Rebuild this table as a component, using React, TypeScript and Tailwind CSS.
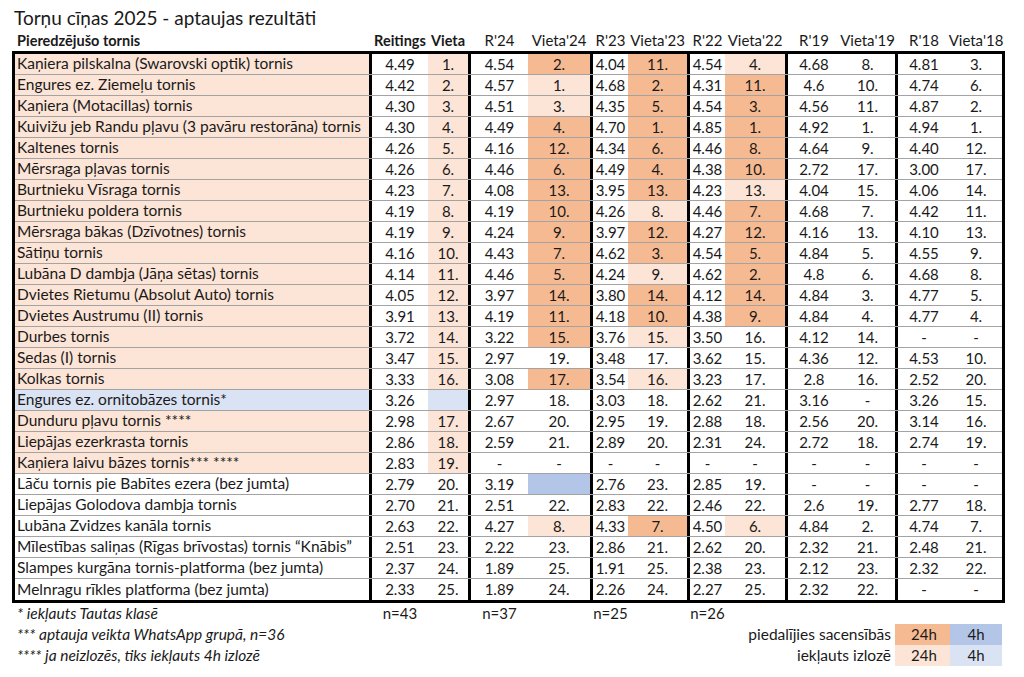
import React from "react";

type Fill = "" | "D" | "L" | "B" | "b";

const fillClass: Record<Fill, string> = {
  "": "bg-white",
  D: "bg-[#f6ba92]",
  L: "bg-[#fce4d6]",
  B: "bg-[#b4c6e7]",
  b: "bg-[#dae3f3]",
};

// column widths in px (thick group borders included in the first cell of each group)
const W = [354, 59, 40, 60, 62, 38, 59, 38, 60, 55, 55, 55, 52];
const groupStart = [1, 3, 5, 7, 9, 11];

type Row = {
  name: string;
  nf: Fill;
  v: string[]; // 12 values after the name
  f: Fill[]; // fill for the 12 value cells
};

const raw: [string, Fill, string, Fill][] = [
  ["Kaņiera pilskalna (Swarovski optik) tornis", "L", "4.49|1.|4.54|2.|4.04|11.|4.54|4.|4.68|8.|4.81|3.", "L"],
  ["Engures ez. Ziemeļu tornis", "L", "4.42|2.|4.57|1.|4.68|2.|4.31|11.|4.6|10.|4.74|6.", "L"],
  ["Kaņiera (Motacillas) tornis", "L", "4.30|3.|4.51|3.|4.35|5.|4.54|3.|4.56|11.|4.87|2.", "L"],
  ["Kuivižu jeb Randu pļavu (3 pavāru restorāna) tornis", "L", "4.30|4.|4.49|4.|4.70|1.|4.85|1.|4.92|1.|4.94|1.", "L"],
  ["Kaltenes tornis", "L", "4.26|5.|4.16|12.|4.34|6.|4.46|8.|4.64|9.|4.40|12.", "L"],
  ["Mērsraga pļavas tornis", "L", "4.26|6.|4.46|6.|4.49|4.|4.38|10.|2.72|17.|3.00|17.", "L"],
  ["Burtnieku Vīsraga tornis", "L", "4.23|7.|4.08|13.|3.95|13.|4.23|13.|4.04|15.|4.06|14.", "L"],
  ["Burtnieku poldera tornis", "L", "4.19|8.|4.19|10.|4.26|8.|4.46|7.|4.68|7.|4.42|11.", "L"],
  ["Mērsraga bākas (Dzīvotnes) tornis", "L", "4.19|9.|4.24|9.|3.97|12.|4.27|12.|4.16|13.|4.10|13.", "L"],
  ["Sātiņu tornis", "L", "4.16|10.|4.43|7.|4.62|3.|4.54|5.|4.84|5.|4.55|9.", "L"],
  ["Lubāna D dambja (Jāņa sētas) tornis", "L", "4.14|11.|4.46|5.|4.24|9.|4.62|2.|4.8|6.|4.68|8.", "L"],
  ["Dvietes Rietumu (Absolut Auto) tornis", "L", "4.05|12.|3.97|14.|3.80|14.|4.12|14.|4.84|3.|4.77|5.", "L"],
  ["Dvietes Austrumu (II) tornis", "L", "3.91|13.|4.19|11.|4.18|10.|4.38|9.|4.84|4.|4.77|4.", "L"],
  ["Durbes tornis", "L", "3.72|14.|3.22|15.|3.76|15.|3.50|16.|4.12|14.|-|-", "L"],
  ["Sedas (I) tornis", "L", "3.47|15.|2.97|19.|3.48|17.|3.62|15.|4.36|12.|4.53|10.", "L"],
  ["Kolkas tornis", "L", "3.33|16.|3.08|17.|3.54|16.|3.23|17.|2.8|16.|2.52|20.", "L"],
  ["Engures ez. ornitobāzes tornis*", "b", "3.26||2.97|18.|3.03|18.|2.62|21.|3.16|-|3.26|15.", "b"],
  ["Dunduru pļavu tornis ****", "L", "2.98|17.|2.67|20.|2.95|19.|2.88|18.|2.56|20.|3.14|16.", "L"],
  ["Liepājas ezerkrasta tornis", "L", "2.86|18.|2.59|21.|2.89|20.|2.31|24.|2.72|18.|2.74|19.", "L"],
  ["Kaņiera laivu bāzes tornis*** ****", "L", "2.83|19.|-|-|-|-|-|-|-|-|-|-", "L"],
  ["Lāču tornis pie Babītes ezera (bez jumta)", "", "2.79|20.|3.19||2.76|23.|2.85|19.|-|-|-|-", ""],
  ["Liepājas Golodova dambja tornis", "", "2.70|21.|2.51|22.|2.83|22.|2.46|22.|2.6|19.|2.77|18.", ""],
  ["Lubāna Zvidzes kanāla tornis", "", "2.63|22.|4.27|8.|4.33|7.|4.50|6.|4.84|2.|4.74|7.", ""],
  ["Mīlestības saliņas (Rīgas brīvostas) tornis “Knābis”", "", "2.51|23.|2.22|23.|2.86|21.|2.62|20.|2.32|21.|2.48|21.", ""],
  ["Slampes kurgāna tornis-platforma (bez jumta)", "", "2.37|24.|1.89|25.|1.91|25.|2.38|23.|2.12|23.|2.32|22.", ""],
  ["Melnragu rīkles platforma (bez jumta)", "", "2.33|25.|1.89|24.|2.26|24.|2.27|25.|2.32|22.|-|-", ""],
];

// fills for Vieta'24, Vieta'23, Vieta'22 per row (W = none)
const v24 = "DLLDDDDDDDDDDDWDWWWWBWLWWW";
const v23 = "DDDDDDDLDDLDDLWLWWWWWWDWWW";
const v22 = "LDDDDDLDDDDDDWWWWWWWWWLWWW";

const toFill = (c: string): Fill => (c === "W" ? "" : (c as Fill));

const rows: Row[] = raw.map(([name, nf, vals, vf], i) => {
  const f: Fill[] = Array(12).fill("");
  f[1] = vf;
  f[3] = toFill(v24[i]);
  f[5] = toFill(v23[i]);
  f[7] = toFill(v22[i]);
  return { name, nf, v: vals.split("|"), f };
});

const font = { fontFamily: "Lato, 'Liberation Sans', sans-serif" };

function Cell({
  i,
  className = "",
  children,
  edge,
}: {
  i: number;
  className?: string;
  children?: React.ReactNode;
  edge: string;
}) {
  return (
    <div
      className={`flex h-full shrink-0 items-center whitespace-nowrap ${
        groupStart.includes(i) ? `border-l-[3px] ${edge}` : ""
      } ${className}`}
      style={{ width: W[i] }}
    >
      {children}
    </div>
  );
}

const headers = ["Reitings", "Vieta", "R'24", "Vieta'24", "R'23", "Vieta'23", "R'22", "Vieta'22", "R'19", "Vieta'19", "R'18", "Vieta'18"];
const none = "border-transparent";

export default function App() {
  return (
    <div className="h-[677px] w-[1024px] bg-white text-[15px] text-[#1a1a1a]" style={font}>
      <div className="flex h-[30px] items-end pb-[3px] pl-[14px] text-[19px] leading-none">
        Torņu cīņas 2025 - aptaujas rezultāti
      </div>

      {/* header row */}
      <div className="ml-[12px] flex h-[21px] w-[993px] border-x-[3px] border-transparent">
        <Cell i={0} edge={none} className="pl-[2px] text-[14.5px] font-bold">
          Pieredzējušo tornis
        </Cell>
        {headers.map((h, k) => (
          <Cell
            key={h}
            i={k + 1}
            edge={none}
            className={`justify-center ${k < 2 ? "text-[14.5px] font-bold" : ""}`}
          >
            {h}
          </Cell>
        ))}
      </div>

      {/* main table */}
      <div className="ml-[12px] w-[993px] border-[3px] border-black">
        {rows.map((r, ri) => (
          <div
            key={r.name}
            className={`flex h-[21px] ${ri < rows.length - 1 ? "border-b border-[#a3a3a3]" : ""}`}
          >
            <Cell i={0} edge="border-black" className={`pl-[2px] text-[15.5px] ${fillClass[r.nf]}`}>
              {r.name}
            </Cell>
            {r.v.map((val, k) => (
              <Cell key={k} i={k + 1} edge="border-black" className={`justify-center ${fillClass[r.f[k]]}`}>
                {val}
              </Cell>
            ))}
          </div>
        ))}
      </div>

      {/* footer */}
      <div className="ml-[12px] w-[993px] border-x-[3px] border-transparent">
        <div className="flex h-[21px]">
          <Cell i={0} edge={none} className="pl-[2px] text-[15.5px] italic">
            * iekļauts Tautas klasē
          </Cell>
          <Cell i={1} edge={none} className="justify-center">n=43</Cell>
          <Cell i={2} edge={none} />
          <Cell i={3} edge={none} className="justify-center">n=37</Cell>
          <Cell i={4} edge={none} />
          <Cell i={5} edge={none} className="justify-center">n=25</Cell>
          <Cell i={6} edge={none} />
          <Cell i={7} edge={none} className="justify-center">n=26</Cell>
        </div>
        <div className="flex h-[21px]">
          <Cell i={0} edge={none} className="pl-[2px] text-[15.5px] italic">
            *** aptauja veikta WhatsApp grupā, n=36
          </Cell>
          {[1, 2, 3, 4, 5, 6, 7, 8, 9].map((k) => (
            <Cell key={k} i={k} edge={none} />
          ))}
          <Cell i={10} edge={none} className="justify-end pr-[4px] text-[15.5px]">
            piedalījies sacensībās
          </Cell>
          <Cell i={11} edge={none} className="justify-center bg-[#f6ba92]">24h</Cell>
          <Cell i={12} edge={none} className="justify-center bg-[#b4c6e7]">4h</Cell>
        </div>
        <div className="flex h-[21px]">
          <Cell i={0} edge={none} className="pl-[2px] text-[15.5px] italic">
            **** ja neizlozēs, tiks iekļauts 4h izlozē
          </Cell>
          {[1, 2, 3, 4, 5, 6, 7, 8, 9].map((k) => (
            <Cell key={k} i={k} edge={none} />
          ))}
          <Cell i={10} edge={none} className="justify-end pr-[4px] text-[15.5px]">
            iekļauts izlozē
          </Cell>
          <Cell i={11} edge={none} className="justify-center bg-[#fce4d6]">24h</Cell>
          <Cell i={12} edge={none} className="justify-center bg-[#dae3f3]">4h</Cell>
        </div>
      </div>
    </div>
  );
}
